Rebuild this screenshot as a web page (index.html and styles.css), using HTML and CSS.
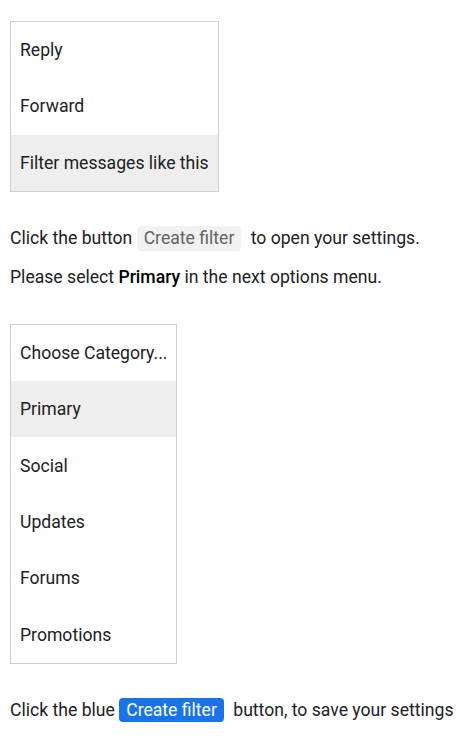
FILE: index.html
```html
<!DOCTYPE html>
<html>
<head>
  <title>Create a filter</title>
  <link rel="stylesheet" href="styles.css">
</head>
<body>
  <div class="menu">
    <div class="item">Reply</div>
    <div class="item">Forward</div>
    <div class="item active">Filter messages like this</div>
  </div>

  <p>Click the button <span class="chip">Create filter</span> to open your settings.</p>
  <p>Please select <b>Primary</b> in the next options menu.</p>

  <div class="menu">
    <div class="item">Choose Category...</div>
    <div class="item active">Primary</div>
    <div class="item">Social</div>
    <div class="item">Updates</div>
    <div class="item">Forums</div>
    <div class="item">Promotions</div>
  </div>

  <p>Click the blue <span class="chip blue">Create filter</span> button, to save your settings</p>
</body>
</html>
```

FILE: styles.css
```css
body { font-family: Roboto, "Liberation Sans", sans-serif; font-size: 17.6px; color: #202124; margin: 0; padding: 21px 10px 10px; }
.menu { display: flex; flex-direction: column; width: max-content; border: 1px solid #cfcfcf; margin: 0 0 34px; }
p + .menu { margin-top: 34px; }
.item { height: 56.3px; display: flex; align-items: center; padding: 0 9px; white-space: nowrap; }
.item.active { background: #eeeeee; }
p { margin: 0 0 14px; line-height: 25px; }
p b { font-weight: 500; color: #000; }
.chip { display: inline-block; background: #f1f1f1; color: #5f6368; padding: 0 7px; margin: 0 5px 0 0; border-radius: 4px; line-height: 25px; }
.chip.blue { background: #1a73e8; color: #fff; line-height: 24px; }
```
